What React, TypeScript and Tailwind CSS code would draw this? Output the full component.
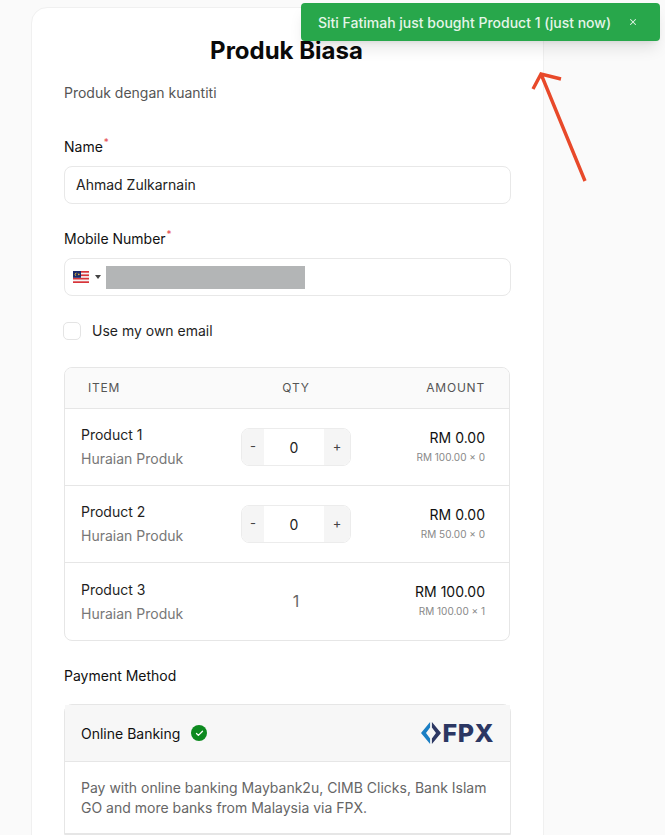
import { Check, X } from "lucide-react";

const products = [
  { name: "Product 1", total: "RM 0.00", calc: "RM 100.00 × 0", stepper: true },
  { name: "Product 2", total: "RM 0.00", calc: "RM 50.00 × 0", stepper: true },
  { name: "Product 3", total: "RM 100.00", calc: "RM 100.00 × 1", stepper: false },
];

function Label({ text }: { text: string }) {
  return (
    <div className="flex h-5 items-center text-[14px] font-normal text-[#111]">
      {text}
      <span className="-mt-2 ml-px text-[10px] leading-none text-[#e5484d]">*</span>
    </div>
  );
}

function Stepper() {
  return (
    <div className="flex h-[38px] w-[110px] overflow-hidden rounded-lg border border-[#ececec] text-[#444]">
      <div className="flex w-[22px] items-center justify-center bg-[#f5f5f5] text-[13px]">-</div>
      <div className="flex flex-1 items-center justify-center bg-white text-[14px] text-[#222]">0</div>
      <div className="flex w-[26px] items-center justify-center bg-[#f5f5f5] text-[13px]">+</div>
    </div>
  );
}

function Flag() {
  return (
    <svg width="16" height="12" viewBox="0 0 16 12" aria-hidden="true">
      <rect width="16" height="12" fill="#f4f4f4" />
      <rect width="16" height="1.7" fill="#d8343a" />
      <rect y="3.4" width="16" height="1.7" fill="#d8343a" />
      <rect y="6.8" width="16" height="1.7" fill="#d8343a" />
      <rect y="10.3" width="16" height="1.7" fill="#d8343a" />
      <rect width="8" height="6.8" fill="#1c2a6b" />
      <circle cx="3.4" cy="3.4" r="1.7" fill="#f2c230" />
      <circle cx="4" cy="3.4" r="1.5" fill="#1c2a6b" />
      <circle cx="5.8" cy="3.4" r="0.8" fill="#f2c230" />
    </svg>
  );
}

function FpxLogo() {
  return (
    <div className="flex items-center gap-[2px]">
      <svg width="20" height="24" viewBox="0 0 22 24" aria-hidden="true">
        <path d="M10 0 L0 12 L10 24 L10 18 L5.5 12 L10 6 Z" fill="#1b7fc4" />
        <path d="M12 0 L22 12 L12 24 L12 18 L16.5 12 L12 6 Z" fill="#2c3763" />
      </svg>
      <span className="text-[25px] font-extrabold leading-none tracking-[0.5px] text-[#2c3763]">FPX</span>
    </div>
  );
}

export default function App() {
  return (
    <div className="relative h-[835px] w-[665px] overflow-hidden bg-[#fafafa] font-['Inter',sans-serif]">
      <div className="ml-[31px] mt-[7px] h-[900px] w-[513px] rounded-t-2xl border border-[#f0f0f0] bg-white px-8 pt-[27px]">
        <h1 className="h-8 pr-[2px] text-center text-[24px] font-bold leading-8 text-[#0a0a0a]">Produk Biasa</h1>
        <p className="mt-4 h-5 text-[14px] leading-5 text-[#555]">Produk dengan kuantiti</p>

        <div className="mt-[33px]">
          <Label text="Name" />
          <div className="mt-[10px] flex h-[38px] items-center rounded-lg border border-[#e8e8e8] px-[11px] pb-px text-[14px] text-[#222]">
            Ahmad Zulkarnain
          </div>
        </div>

        <div className="mt-6">
          <Label text="Mobile Number" />
          <div className="mt-[10px] flex h-[38px] items-center rounded-lg border border-[#e8e8e8] pl-2">
            <Flag />
            <span className="ml-[6px] h-0 w-0 border-x-[3px] border-t-4 border-x-transparent border-t-[#444]" />
            <div className="ml-[5px] h-[23px] w-[199px] bg-[#b3b5b6]" />
          </div>
        </div>

        <label className="-ml-px mt-[26px] flex h-[18px] items-center gap-[11px] text-[14px] font-normal text-[#1f1f1f]">
          <span className="h-[18px] w-[18px] rounded-[5px] border border-[#e4e4e4] bg-white" />
          <span className="-mt-0.5">Use my own email</span>
        </label>

        <div className="mt-[27px] w-[446px] overflow-hidden rounded-lg border border-[#e6e6e6]">
          <div className="grid h-[41px] grid-cols-[176px_110px_1fr] items-center border-b border-[#e6e6e6] bg-[#fafafa] text-[12px] font-normal tracking-[0.8px] text-[#555]">
            <div className="pl-[23px]">ITEM</div>
            <div className="text-center">QTY</div>
            <div className="pr-6 text-right">AMOUNT</div>
          </div>
          {products.map((p, i) => (
            <div
              key={p.name}
              className={`grid h-[77px] grid-cols-[176px_110px_1fr] items-center ${i < 2 ? "border-b border-[#e6e6e6]" : ""}`}
            >
              <div className="pl-4">
                <div className="text-[14px] leading-5 text-[#1f1f1f]">{p.name}</div>
                <div className="mt-1 text-[14px] leading-5 text-[#777]">Huraian Produk</div>
              </div>
              <div className="flex justify-center">
                {p.stepper ? <Stepper /> : <span className="-mt-px text-[16px] text-[#666]">1</span>}
              </div>
              <div className="pb-[2px] pr-6 text-right">
                <div className="text-[14px] font-normal leading-5 text-[#111]">{p.total}</div>
                <div className="mt-[1px] text-[10px] leading-4 text-[#888]">{p.calc}</div>
              </div>
            </div>
          ))}
        </div>

        <div className="mt-[25px] h-5 text-[14px] font-normal leading-5 text-[#111]">Payment Method</div>

        <div className="mt-[18px] rounded-t-lg border border-[#e6e6e6]">
          <div className="flex h-[57px] items-center justify-between border-b border-[#e6e6e6] bg-[#f7f7f7] pl-4 pr-4">
            <div className="flex items-center gap-[11px] text-[14px] font-normal text-[#111]">
              Online Banking
              <span className="flex h-4 w-4 items-center justify-center rounded-full bg-[#0d8a1f]">
                <Check size={9} strokeWidth={3.5} className="text-white" />
              </span>
            </div>
            <FpxLogo />
          </div>
          <div className="h-[72px] border-b border-[#e6e6e6] px-4 pt-4 text-[14px] leading-5 text-[#666]">
            Pay with online banking Maybank2u, CIMB Clicks, Bank Islam GO and more banks from Malaysia via FPX.
          </div>
        </div>
      </div>

      <div className="absolute left-[301px] top-[3px] flex h-[38px] w-[359px] items-center justify-between rounded-[4px] bg-[#28a74b] pl-[17px] pr-[22px] text-[14px] font-medium text-[#e4f5e8] shadow-lg">
        Siti Fatimah just bought Product 1 (just now)
        <X size={10} strokeWidth={2.5} />
      </div>

      <svg className="absolute left-0 top-0" width="665" height="835" aria-hidden="true" fill="none">
        <path d="M585 181 L541 74 M533 89 L541 74 L561 79" stroke="#e8492a" strokeWidth="3.4" />
      </svg>
    </div>
  );
}
